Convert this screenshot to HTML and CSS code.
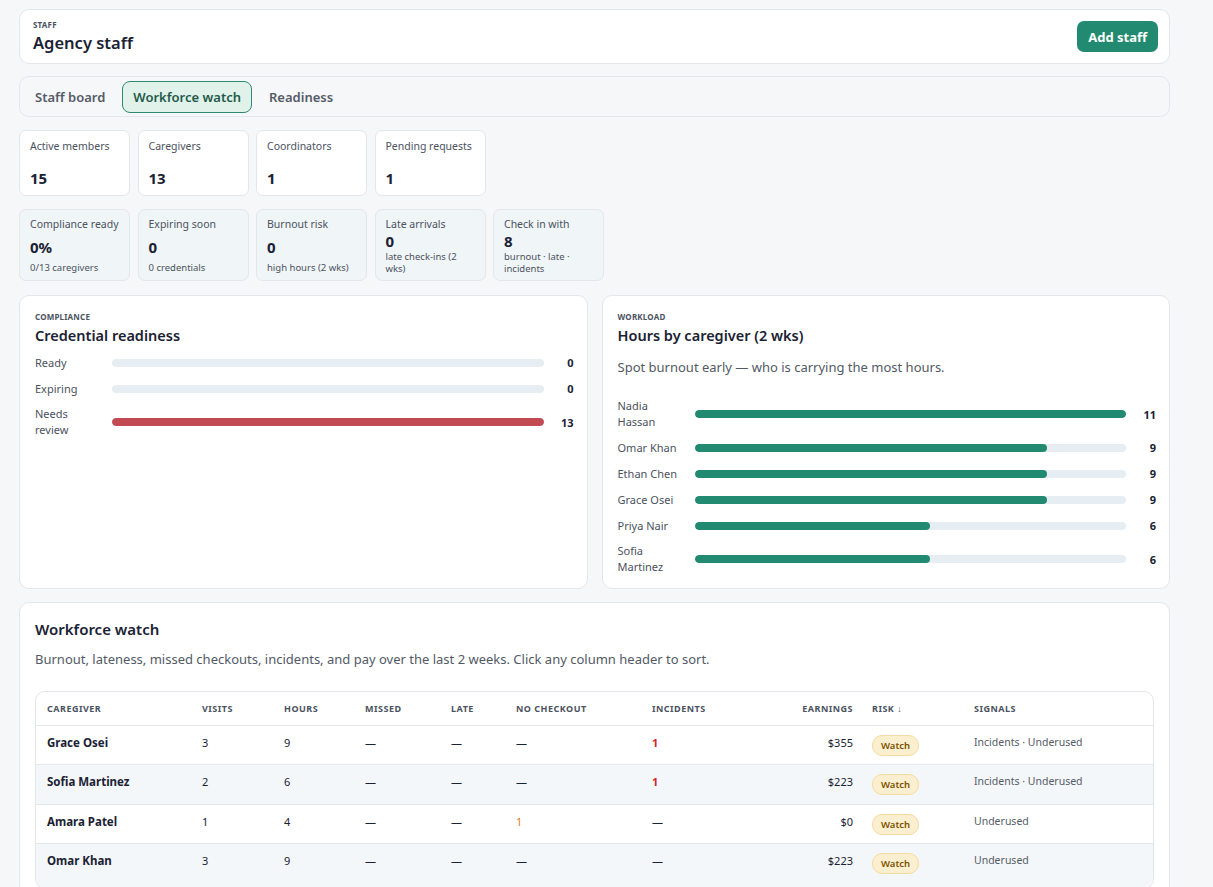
FILE: index.html
```html
<!DOCTYPE html>
<html lang="en">
<head>
  <meta charset="UTF-8">
  <meta name="viewport" content="width=device-width, initial-scale=1.0">
  <title>Agency staff</title>
  <link rel="stylesheet" href="styles.css">
</head>
<body>
  <div class="page">
    <div class="card header">
      <div>
        <div class="eyebrow">Staff</div>
        <h1>Agency staff</h1>
      </div>
      <button class="btn-primary">Add staff</button>
    </div>

    <div class="tabs">
      <button class="tab">Staff board</button>
      <button class="tab active">Workforce watch</button>
      <button class="tab">Readiness</button>
    </div>

    <div class="stats">
      <div class="stat"><div class="stat-label">Active members</div><div class="stat-value">15</div></div>
      <div class="stat"><div class="stat-label">Caregivers</div><div class="stat-value">13</div></div>
      <div class="stat"><div class="stat-label">Coordinators</div><div class="stat-value">1</div></div>
      <div class="stat"><div class="stat-label">Pending requests</div><div class="stat-value">1</div></div>
    </div>

    <div class="stats">
      <div class="stat soft"><div class="stat-label">Compliance ready</div><div class="stat-value">0%</div><div class="stat-sub">0/13 caregivers</div></div>
      <div class="stat soft"><div class="stat-label">Expiring soon</div><div class="stat-value">0</div><div class="stat-sub">0 credentials</div></div>
      <div class="stat soft"><div class="stat-label">Burnout risk</div><div class="stat-value">0</div><div class="stat-sub">high hours (2 wks)</div></div>
      <div class="stat soft"><div class="stat-label">Late arrivals</div><div class="stat-value">0</div><div class="stat-sub">late check-ins (2 wks)</div></div>
      <div class="stat soft"><div class="stat-label">Check in with</div><div class="stat-value">8</div><div class="stat-sub">burnout · late · incidents</div></div>
    </div>

    <div class="panels">
      <div class="card panel">
        <div class="eyebrow">Compliance</div>
        <h2>Credential readiness</h2>
        <div class="bars tight">
          <div class="bar-row"><span class="bar-label">Ready</span><div class="track"></div><span class="bar-val">0</span></div>
          <div class="bar-row"><span class="bar-label">Expiring</span><div class="track"></div><span class="bar-val">0</span></div>
          <div class="bar-row"><span class="bar-label">Needs review</span><div class="track"><div class="fill red" style="width:100%"></div></div><span class="bar-val">13</span></div>
        </div>
      </div>

      <div class="card panel">
        <div class="eyebrow">Workload</div>
        <h2>Hours by caregiver (2 wks)</h2>
        <p class="muted">Spot burnout early — who is carrying the most hours.</p>
        <div class="bars">
          <div class="bar-row"><span class="bar-label">Nadia Hassan</span><div class="track"><div class="fill" style="width:100%"></div></div><span class="bar-val">11</span></div>
          <div class="bar-row"><span class="bar-label">Omar Khan</span><div class="track"><div class="fill" style="width:81.8%"></div></div><span class="bar-val">9</span></div>
          <div class="bar-row"><span class="bar-label">Ethan Chen</span><div class="track"><div class="fill" style="width:81.8%"></div></div><span class="bar-val">9</span></div>
          <div class="bar-row"><span class="bar-label">Grace Osei</span><div class="track"><div class="fill" style="width:81.8%"></div></div><span class="bar-val">9</span></div>
          <div class="bar-row"><span class="bar-label">Priya Nair</span><div class="track"><div class="fill" style="width:54.5%"></div></div><span class="bar-val">6</span></div>
          <div class="bar-row"><span class="bar-label">Sofia Martinez</span><div class="track"><div class="fill" style="width:54.5%"></div></div><span class="bar-val">6</span></div>
        </div>
      </div>
    </div>

    <div class="card watch">
      <h2>Workforce watch</h2>
      <p class="muted">Burnout, lateness, missed checkouts, incidents, and pay over the last 2 weeks. Click any column header to sort.</p>
      <div class="table-wrap">
        <table>
          <colgroup>
            <col style="width:155px"><col style="width:82px"><col style="width:81px"><col style="width:86px"><col style="width:65px">
            <col style="width:136px"><col style="width:111px"><col style="width:111px"><col style="width:100px"><col style="width:193px">
          </colgroup>
          <thead>
            <tr>
              <th>Caregiver</th><th>Visits</th><th>Hours</th><th>Missed</th><th>Late</th>
              <th>No checkout</th><th>Incidents</th><th class="num">Earnings</th><th class="risk">Risk ↓</th><th>Signals</th>
            </tr>
          </thead>
          <tbody>
            <tr>
              <td class="name">Grace Osei</td><td>3</td><td>9</td><td>—</td><td>—</td><td>—</td>
              <td class="bad">1</td><td class="num">$355</td><td class="risk"><span class="badge">Watch</span></td><td class="signals">Incidents · Underused</td>
            </tr>
            <tr>
              <td class="name">Sofia Martinez</td><td>2</td><td>6</td><td>—</td><td>—</td><td>—</td>
              <td class="bad">1</td><td class="num">$223</td><td class="risk"><span class="badge">Watch</span></td><td class="signals">Incidents · Underused</td>
            </tr>
            <tr>
              <td class="name">Amara Patel</td><td>1</td><td>4</td><td>—</td><td>—</td><td class="warn">1</td>
              <td>—</td><td class="num">$0</td><td class="risk"><span class="badge">Watch</span></td><td class="signals">Underused</td>
            </tr>
            <tr>
              <td class="name">Omar Khan</td><td>3</td><td>9</td><td>—</td><td>—</td><td>—</td>
              <td>—</td><td class="num">$223</td><td class="risk"><span class="badge">Watch</span></td><td class="signals">Underused</td>
            </tr>
          </tbody>
        </table>
      </div>
    </div>
  </div>
</body>
</html>
```

FILE: styles.css
```css
* {
  box-sizing: border-box;
}
body {
  margin: 0;
  background-color: #f6f7f9;
  font-family: 'Noto Sans', 'Open Sans', sans-serif;
  color: #1a2233;
}
.page {
  width: 1151px;
  margin-left: 19px;
  padding: 9px 0 20px;
}
.card {
  background-color: white;
  border: 1px solid #e3e6ea;
  border-radius: 10px;
}
.eyebrow {
  font-size: 8px;
  line-height: 11px;
  font-weight: 700;
  letter-spacing: 0.2px;
  text-transform: uppercase;
  color: #4b5260;
}
h1 {
  margin: 2px 0 0;
  font-size: 16.5px;
  line-height: 22px;
  font-weight: 600;
}
h2 {
  margin: 3px 0 0;
  font-size: 14.5px;
  line-height: 20px;
  font-weight: 600;
}
.muted {
  color: #535a66;
  font-size: 13px;
  line-height: 18px;
}
.header {
  display: flex;
  align-items: center;
  justify-content: space-between;
  height: 55px;
  padding: 0 11px 0 13px;
}
.btn-primary {
  background-color: #218a70;
  color: white;
  border: none;
  border-radius: 7px;
  font-family: inherit;
  font-size: 13px;
  font-weight: 700;
  padding: 0 11px;
  height: 31px;
}
.tabs {
  display: flex;
  align-items: center;
  gap: 6px;
  margin-top: 12px;
  height: 41px;
  padding: 0 4px;
  border: 1px solid #e3e6ea;
  border-radius: 10px;
}
.tab {
  height: 32px;
  padding: 0 10px;
  background: none;
  border: 1px solid transparent;
  border-radius: 8px;
  font-family: inherit;
  font-size: 13px;
  font-weight: 600;
  color: #545b66;
}
.tab.active {
  background-color: #e1f2eb;
  border-color: #2d8a6e;
  color: #1e5a4a;
}
.stats {
  display: flex;
  gap: 7.5px;
  margin-top: 13px;
}
.stat {
  width: 111px;
  height: 66px;
  display: flex;
  flex-direction: column;
  justify-content: space-between;
  padding: 8px 10px 7px;
  background-color: white;
  border: 1px solid #e3e6ea;
  border-radius: 7px;
}
.stat.soft {
  height: 72px;
  padding: 7px 10px 6px;
  background-color: #f0f5f7;
}
.stat-label {
  font-size: 10.5px;
  line-height: 15px;
  color: #4b5260;
}
.stat-value {
  font-size: 15px;
  line-height: 19px;
  font-weight: 700;
}
.stat-sub {
  font-size: 9.5px;
  line-height: 12px;
  color: #4b5260;
}
.panels {
  display: grid;
  grid-template-columns: 1fr 1fr;
  gap: 14px;
  margin-top: 14px;
}
.panel {
  height: 294px;
  padding: 15px 13px 15px 15px;
}
.panel .muted {
  margin: 13px 0 22px;
}
.bars {
  display: flex;
  flex-direction: column;
  gap: 9px;
}
.bars.tight {
  margin-top: 9px;
}
.bar-row {
  display: flex;
  align-items: center;
  gap: 4px;
  min-height: 17px;
}
.bar-label {
  width: 73px;
  padding-right: 8px;
  font-size: 11px;
  line-height: 16px;
  color: #4b5260;
}
.track {
  flex: 1;
  height: 8px;
  border-radius: 4px;
  background-color: #e6eef3;
  overflow: hidden;
}
.fill {
  height: 100%;
  border-radius: 4px;
  background-color: #218a70;
}
.fill.red {
  background-color: #c24a52;
}
.bar-val {
  width: 26px;
  text-align: right;
  font-size: 11px;
  font-weight: 700;
}
.watch {
  margin-top: 13px;
  padding: 16px 15px;
}
.watch h2 {
  margin: 0;
  font-size: 15px;
}
.watch .muted {
  margin: 11px 0 23px;
}
.table-wrap {
  border: 1px solid #e3e6ea;
  border-radius: 10px;
  overflow: hidden;
}
table {
  width: 100%;
  table-layout: fixed;
  border-collapse: collapse;
}
th {
  height: 33px;
  padding: 0 11px;
  text-align: left;
  font-size: 9px;
  font-weight: 700;
  letter-spacing: 0.5px;
  text-transform: uppercase;
  color: #4b5260;
  border-bottom: 1px solid #e3e6ea;
}
td {
  height: 39.5px;
  padding: 9px 11px 0;
  vertical-align: top;
  font-size: 11px;
  line-height: 16px;
  border-bottom: 1px solid #e3e6ea;
}
tbody tr:nth-child(even) {
  background-color: #f4f7fa;
}
tbody tr:last-child td {
  height: 44px;
}
.num {
  text-align: right;
}
th.num,
td.num {
  padding-right: 10px;
}
th.risk,
td.risk {
  padding-left: 9px;
}
td.name {
  font-size: 11.5px;
  font-weight: 700;
}
td.bad {
  color: #d3262b;
  font-weight: 700;
}
td.warn {
  color: #dd7a25;
}
td.signals {
  font-size: 10.5px;
  color: #555c68;
  padding-top: 8px;
}
.badge {
  display: inline-block;
  padding: 2px 8px;
  font-size: 9.5px;
  line-height: 15px;
  font-weight: 600;
  color: #7a5300;
  background-color: #fcefcf;
  border: 1px solid #f2dca2;
  border-radius: 10px;
}
```
